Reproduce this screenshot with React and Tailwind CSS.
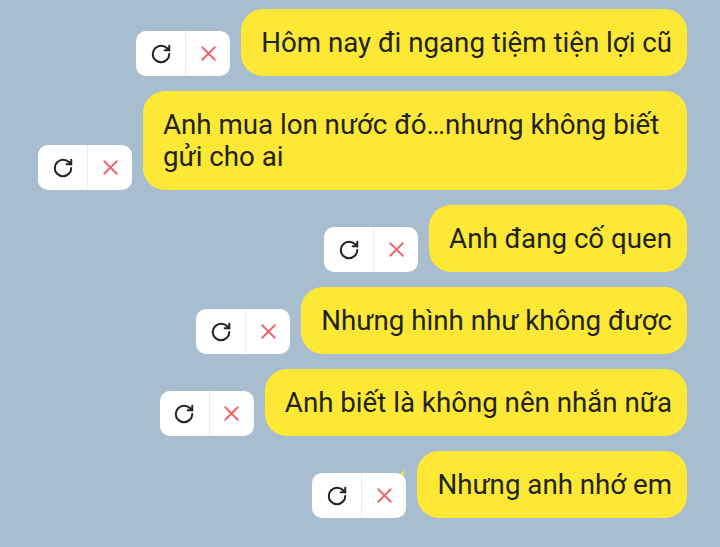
import React from 'react';
import { RotateCw, X } from 'lucide-react';

const messages = [
  'Hôm nay đi ngang tiệm tiện lợi cũ',
  'Anh mua lon nước đó…nhưng không biết gửi cho ai',
  'Anh đang cố quen',
  'Nhưng hình như không được',
  'Anh biết là không nên nhắn nữa',
  'Nhưng anh nhớ em',
];

function RetryControls() {
  return (
    <div className="relative z-10 flex h-[45px] w-[94px] shrink-0 overflow-hidden rounded-[10px] bg-white">
      <button className="flex w-[49px] items-center justify-center">
        <RotateCw className="h-[22px] w-[22px] text-[#222]" strokeWidth={2.2} />
      </button>
      <button className="flex flex-1 items-center justify-center border-l border-[#ececec]">
        <X className="h-[25px] w-[25px] text-[#f0646c]" strokeWidth={1.8} />
      </button>
    </div>
  );
}

export default function App() {
  return (
    <div
      className="flex h-[547px] w-[720px] flex-col items-end gap-[15px] bg-[#a9bdd0] pt-[9px] pr-[33px]"
      style={{ fontFamily: 'Roboto, "Noto Sans", sans-serif' }}
    >
      {messages.map((text, i) => (
        <div key={text} className="flex items-end gap-[11px]">
          <RetryControls />
          <div className="relative max-w-[544px] rounded-[22px] bg-[#fde935] pt-[18px] pr-[15px] pb-[17px] pl-5 text-[27.7px] leading-[32px] text-[#222]">
            {i === messages.length - 1 && (
              <span className="absolute top-[18px] left-[-20px] h-[10px] w-[7px] bg-[#f2e33c] [clip-path:polygon(100%_0,100%_100%,0_100%)]" />
            )}
            {text}
          </div>
        </div>
      ))}
    </div>
  );
}
